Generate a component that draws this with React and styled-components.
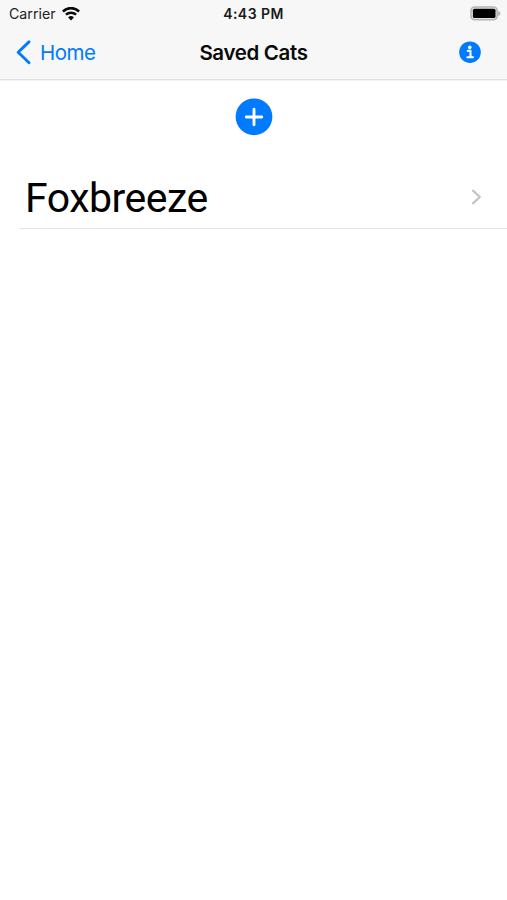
import { styled, createGlobalStyle } from "styled-components";

const cats = ["Foxbreeze"];

export default function App() {
  return (
    <>
      <GlobalStyle />
      <Screen>
        <Header>
          <StatusBar>
            <CarrierArea>
              <Carrier>Carrier</Carrier>
              <WifiIcon />
            </CarrierArea>
            <Clock>4:43 PM</Clock>
            <BatteryArea>
              <BatteryIcon />
            </BatteryArea>
          </StatusBar>
          <NavBar>
            <BackButton>
              <svg width="15" height="25" viewBox="0 0 15 25" fill="none">
                <path d="M13 1.9 L2.2 12.3 L13 22.7" stroke="#007aff" strokeWidth="2.9" strokeLinecap="round" strokeLinejoin="round" />
              </svg>
              <BackLabel>Home</BackLabel>
            </BackButton>
            <Title>Saved Cats</Title>
            <InfoButton aria-label="Info">
              <InfoIcon />
            </InfoButton>
          </NavBar>
        </Header>

        <AddArea>
          <AddButton aria-label="Add cat">
            <svg width="38" height="38" viewBox="0 0 38 38">
              <circle cx="19" cy="18.8" r="18.4" fill="#007aff" />
              <path d="M19 11.3 V26.7 M11.3 19 H26.7" stroke="#fff" strokeWidth="2.9" strokeLinecap="round" />
            </svg>
          </AddButton>
        </AddArea>

        <CatList>
          {cats.map((cat) => (
            <CatRow key={cat}>
              <CatName>{cat}</CatName>
              <svg width="11" height="16" viewBox="0 0 11 16" fill="none">
                <path d="M2 1.7 L8.8 8 L2 14.3" stroke="#c4c4c7" strokeWidth="2.3" strokeLinecap="round" strokeLinejoin="round" />
              </svg>
            </CatRow>
          ))}
        </CatList>
      </Screen>
    </>
  );
}

function WifiIcon() {
  return (
    <svg width="18" height="14" viewBox="0 0 18 14" fill="none" stroke="#0a0a0a">
      <path d="M0.9 4.4 A11.8 11.8 0 0 1 17.1 4.4" strokeWidth="2.7" />
      <path d="M3.9 7.7 A7.5 7.5 0 0 1 14.1 7.7" strokeWidth="2.4" />
      <path d="M9 13.4 L6.1 10.5 A4.2 4.2 0 0 1 11.9 10.5 Z" fill="#0a0a0a" stroke="none" />
    </svg>
  );
}

function BatteryIcon() {
  return (
    <svg width="31" height="15" viewBox="0 0 31 15">
      <rect x="1" y="1" width="26.2" height="12.8" rx="3.8" fill="#e4e4e4" stroke="#b4b4b4" strokeWidth="1.6" />
      <rect x="2.9" y="2.7" width="22.6" height="9.4" rx="1.6" fill="#000" />
      <path d="M28.4 4.9 C30.9 6 30.9 8.8 28.4 9.9 Z" fill="#aaa" />
    </svg>
  );
}

function InfoIcon() {
  return (
    <svg width="22" height="22" viewBox="0 0 22 22">
      <circle cx="11" cy="11.2" r="10.8" fill="#007aff" />
      <circle cx="10.8" cy="6.4" r="1.8" fill="#fff" />
      <path d="M8.8 9.9 H11.5 V16 M8.4 16.2 H14" fill="none" stroke="#fff" strokeWidth="2.1" strokeLinecap="round" strokeLinejoin="round" />
    </svg>
  );
}

const GlobalStyle = createGlobalStyle`
  body {
    margin: 0;
    background-color: #fff;
    font-family: "Inter", "Liberation Sans", sans-serif;
  }
  * {
    box-sizing: border-box;
  }
  svg {
    display: block;
    flex-shrink: 0;
  }
  button {
    padding: 0;
    border: none;
    background: none;
    font-family: inherit;
    cursor: pointer;
  }
`;

const Screen = styled.div`
  width: 100%;
  height: 100vh;
  background-color: #fff;
  overflow: hidden;
`;
const Header = styled.header`
  height: 80px;
  background-color: #f7f7f7;
  border-bottom: 1px solid #e0e0e0;
  box-shadow: 0 1px 0 #f3f3f3;
`;
const StatusBar = styled.div`
  height: 27px;
  padding: 0 6px;
  display: grid;
  grid-template-columns: 1fr auto 1fr;
  align-items: center;
`;
const CarrierArea = styled.div`
  padding-left: 3px;
  display: flex;
  align-items: center;
  gap: 6px;
`;
const Carrier = styled.span`
  font-size: 14.2px;
  line-height: 18px;
  color: #222;
`;
const Clock = styled.span`
  font-size: 14px;
  line-height: 18px;
  font-weight: 600;
  letter-spacing: 0.45px;
  color: #1a1a1a;
`;
const BatteryArea = styled.div`
  display: flex;
  justify-content: flex-end;
`;
const NavBar = styled.nav`
  height: 50px;
  padding: 0 16px;
  display: grid;
  grid-template-columns: 1fr auto 1fr;
  align-items: center;
`;
const BackButton = styled.button`
  display: flex;
  align-items: center;
  gap: 9px;
  color: #007aff;
`;
const BackLabel = styled.span`
  padding-top: 1px;
  font-size: 20.5px;
  line-height: 26px;
  letter-spacing: -0.5px;
`;
const Title = styled.h1`
  margin: 0;
  padding-top: 1px;
  font-size: 20.5px;
  line-height: 26px;
  font-weight: 600;
  letter-spacing: -0.35px;
  color: #0a0a0a;
`;
const InfoButton = styled.button`
  justify-self: end;
  margin-right: 10px;
`;
const AddArea = styled.div`
  height: 86px;
  padding-top: 18px;
  display: flex;
  justify-content: center;
  align-items: flex-start;
`;
const AddButton = styled.button`
  border-radius: 50%;
`;
const CatList = styled.ul`
  margin: 0;
  padding: 0 0 0 20px;
  list-style: none;
`;
const CatRow = styled.li`
  height: 63px;
  padding: 0 25px 0 5px;
  display: flex;
  align-items: center;
  justify-content: space-between;
  border-bottom: 1px solid #e4e4e6;
`;
const CatName = styled.span`
  padding-top: 2px;
  font-family: "Roboto", "Liberation Sans", sans-serif;
  font-size: 41px;
  line-height: 48px;
  letter-spacing: -0.5px;
  color: #000;
`;
